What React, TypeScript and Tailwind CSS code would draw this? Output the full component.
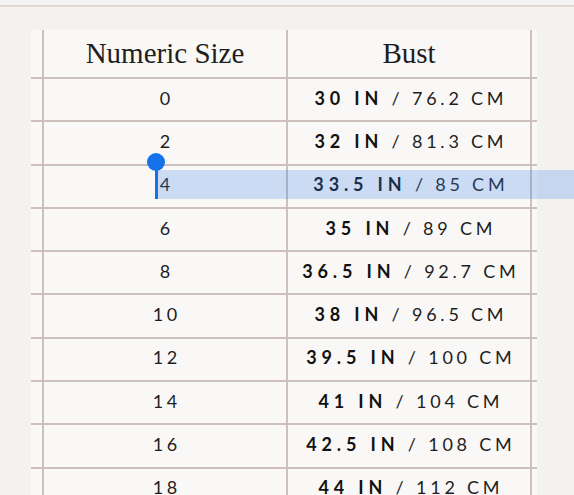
const rows = [
  { size: "0", inch: "30", cm: "76.2" },
  { size: "2", inch: "32", cm: "81.3" },
  { size: "4", inch: "33.5", cm: "85" },
  { size: "6", inch: "35", cm: "89" },
  { size: "8", inch: "36.5", cm: "92.7" },
  { size: "10", inch: "38", cm: "96.5" },
  { size: "12", inch: "39.5", cm: "100" },
  { size: "14", inch: "41", cm: "104" },
  { size: "16", inch: "42.5", cm: "108" },
  { size: "18", inch: "44", cm: "112" },
];

const serif = { fontFamily: '"Liberation Serif", "DejaVu Serif", serif' };

export default function App() {
  return (
    <div className="relative h-[495px] w-[574px] overflow-hidden bg-[#f3f2ef]">
      <div className="h-[7px] border-b-2 border-[#e4d6d3] bg-[#f5f4f2]" />

      <div className="ml-[31px] mt-[23px] w-[506px] bg-[#faf8f6] font-['Lato',sans-serif] text-[#1e1e1e]">
        {/* header */}
        <div className="flex h-[49px] border-b-2 border-[#cdbfbc] pl-[11px]">
          <div
            className="flex w-[244px] items-center justify-center border-l-2 border-[#cdbfbc] text-[29px] text-[#1e1e1e]"
            style={serif}
          >
            Numeric Size
          </div>
          <div
            className="flex w-[246px] items-center justify-center border-x-2 border-[#cdbfbc] text-[29px] text-[#1e1e1e]"
            style={serif}
          >
            Bust
          </div>
        </div>

        {rows.map((r) => (
          <div
            key={r.size}
            className="flex h-[43.3px] border-b-2 border-[#cdbfbc] pl-[11px] text-[18px]"
          >
            <div className="flex w-[244px] items-center justify-center border-l-2 border-[#cdbfbc] pb-[3px] tracking-[0.2em]">
              <span className="-mr-[0.2em]">{r.size}</span>
            </div>
            <div className="flex w-[246px] items-center justify-center border-x-2 border-[#cdbfbc] pb-[3px] tracking-[0.21em]">
              <span className="-mr-[0.21em] whitespace-pre">
                <b className="font-bold tracking-[0.27em] text-[#111]">{r.inch} IN</b> / {r.cm} CM
              </span>
            </div>
          </div>
        ))}
      </div>

      {/* text selection overlay and caret handle */}
      <div className="absolute left-[155px] top-[170px] h-[29px] w-[430px] bg-[#3a85ec]/25" />
      <div className="absolute left-[155px] top-[162px] h-[37px] w-[3px] bg-[#1672ea]" />
      <div className="absolute left-[147px] top-[153px] h-[18px] w-[18px] rounded-full bg-[#1672ea]" />
    </div>
  );
}
